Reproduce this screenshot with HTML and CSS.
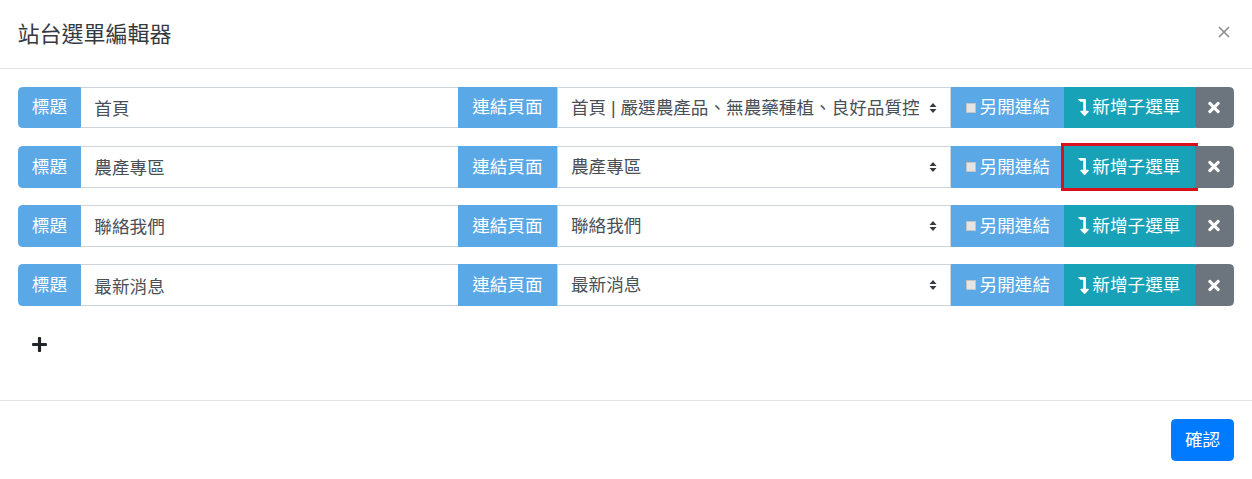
FILE: index.html
```html
<!DOCTYPE html>
<html lang="zh-Hant">
<head>
    <meta charset="UTF-8">
    <meta name="viewport" content="width=device-width, initial-scale=1.0">
    <title>站台選單編輯器</title>
    <link rel="stylesheet" href="styles.css">
</head>
<body>
    <div class="modal">
        <!-- 標頭 -->
        <div class="modal-header">
            <h5 class="modal-title">站台選單編輯器</h5>
            <button class="close-btn" type="button" aria-label="Close">
                <svg width="12" height="12" viewBox="0 0 12 12"><path d="M1 1L11 11M11 1L1 11" stroke="#8c8c8c" stroke-width="1.6" fill="none"/></svg>
            </button>
        </div>

        <!-- 選單列表 -->
        <div class="modal-body">
            <div class="menu-row">
                <span class="group-text first">標題</span>
                <input class="form-control" type="text" value="首頁">
                <span class="group-text">連結頁面</span>
                <div class="select-wrap">
                    <select class="custom-select">
                        <option>首頁 | 嚴選農產品、無農藥種植、良好品質控管</option>
                    </select>
                    <svg class="select-arrow" width="8" height="12" viewBox="0 0 8 12"><path d="M4 1L7.5 5H0.5Z M4 11L0.5 7H7.5Z" fill="#343a40"/></svg>
                </div>
                <label class="group-text"><span class="check-box"></span>另開連結</label>
                <button class="btn btn-info" type="button">
                    <svg width="11" height="17" viewBox="0 0 320 512"><path fill="#fff" d="M313.553 392.331L209.587 504.334c-9.485 10.214-25.676 10.229-35.174 0L70.438 392.331C56.232 377.031 67.062 352 88.025 352H152V80H68.024a11.996 11.996 0 0 1-8.485-3.515l-56-56C-4.021 12.926 1.333 0 12.024 0H208c13.255 0 24 10.745 24 24v328h63.966c20.878 0 31.851 24.969 17.587 40.331z"/></svg>新增子選單
                </button>
                <button class="btn btn-secondary last" type="button">
                    <svg width="12" height="17" viewBox="0 0 352 512"><path fill="#fff" d="M242.72 256l100.07-100.07c12.28-12.28 12.28-32.19 0-44.48l-22.24-22.24c-12.28-12.28-32.19-12.28-44.48 0L176 189.28 75.930 89.21c-12.28-12.28-32.19-12.28-44.48 0L9.21 111.45c-12.28 12.28-12.28 32.19 0 44.48L109.28 256 9.21 356.07c-12.280 12.28-12.28 32.19 0 44.48l22.24 22.24c12.28 12.28 32.2 12.28 44.48 0L176 322.72l100.07 100.07c12.28 12.28 32.2 12.28 44.48 0l22.24-22.24c12.28-12.28 12.28-32.19 0-44.48L242.72 256z"/></svg>
                </button>
            </div>

            <div class="menu-row">
                <span class="group-text first">標題</span>
                <input class="form-control" type="text" value="農產專區">
                <span class="group-text">連結頁面</span>
                <div class="select-wrap">
                    <select class="custom-select">
                        <option>農產專區</option>
                    </select>
                    <svg class="select-arrow" width="8" height="12" viewBox="0 0 8 12"><path d="M4 1L7.5 5H0.5Z M4 11L0.5 7H7.5Z" fill="#343a40"/></svg>
                </div>
                <label class="group-text"><span class="check-box"></span>另開連結</label>
                <button class="btn btn-info marked" type="button">
                    <svg width="11" height="17" viewBox="0 0 320 512"><path fill="#fff" d="M313.553 392.331L209.587 504.334c-9.485 10.214-25.676 10.229-35.174 0L70.438 392.331C56.232 377.031 67.062 352 88.025 352H152V80H68.024a11.996 11.996 0 0 1-8.485-3.515l-56-56C-4.021 12.926 1.333 0 12.024 0H208c13.255 0 24 10.745 24 24v328h63.966c20.878 0 31.851 24.969 17.587 40.331z"/></svg>新增子選單
                </button>
                <button class="btn btn-secondary last" type="button">
                    <svg width="12" height="17" viewBox="0 0 352 512"><path fill="#fff" d="M242.72 256l100.07-100.07c12.28-12.28 12.28-32.19 0-44.48l-22.24-22.24c-12.28-12.28-32.19-12.28-44.48 0L176 189.28 75.930 89.21c-12.28-12.28-32.19-12.28-44.48 0L9.21 111.45c-12.28 12.28-12.28 32.19 0 44.48L109.28 256 9.21 356.07c-12.280 12.28-12.28 32.19 0 44.48l22.24 22.24c12.28 12.28 32.2 12.28 44.48 0L176 322.72l100.07 100.07c12.28 12.28 32.2 12.28 44.48 0l22.24-22.24c12.28-12.28 12.28-32.19 0-44.48L242.72 256z"/></svg>
                </button>
            </div>

            <div class="menu-row">
                <span class="group-text first">標題</span>
                <input class="form-control" type="text" value="聯絡我們">
                <span class="group-text">連結頁面</span>
                <div class="select-wrap">
                    <select class="custom-select">
                        <option>聯絡我們</option>
                    </select>
                    <svg class="select-arrow" width="8" height="12" viewBox="0 0 8 12"><path d="M4 1L7.5 5H0.5Z M4 11L0.5 7H7.5Z" fill="#343a40"/></svg>
                </div>
                <label class="group-text"><span class="check-box"></span>另開連結</label>
                <button class="btn btn-info" type="button">
                    <svg width="11" height="17" viewBox="0 0 320 512"><path fill="#fff" d="M313.553 392.331L209.587 504.334c-9.485 10.214-25.676 10.229-35.174 0L70.438 392.331C56.232 377.031 67.062 352 88.025 352H152V80H68.024a11.996 11.996 0 0 1-8.485-3.515l-56-56C-4.021 12.926 1.333 0 12.024 0H208c13.255 0 24 10.745 24 24v328h63.966c20.878 0 31.851 24.969 17.587 40.331z"/></svg>新增子選單
                </button>
                <button class="btn btn-secondary last" type="button">
                    <svg width="12" height="17" viewBox="0 0 352 512"><path fill="#fff" d="M242.72 256l100.07-100.07c12.28-12.28 12.28-32.19 0-44.48l-22.24-22.24c-12.28-12.28-32.19-12.28-44.48 0L176 189.28 75.930 89.21c-12.28-12.28-32.19-12.28-44.48 0L9.21 111.45c-12.28 12.28-12.28 32.19 0 44.48L109.28 256 9.21 356.07c-12.280 12.28-12.28 32.19 0 44.48l22.24 22.24c12.28 12.28 32.2 12.28 44.48 0L176 322.72l100.07 100.07c12.28 12.28 32.2 12.28 44.48 0l22.24-22.24c12.28-12.28 12.28-32.19 0-44.48L242.72 256z"/></svg>
                </button>
            </div>

            <div class="menu-row">
                <span class="group-text first">標題</span>
                <input class="form-control" type="text" value="最新消息">
                <span class="group-text">連結頁面</span>
                <div class="select-wrap">
                    <select class="custom-select">
                        <option>最新消息</option>
                    </select>
                    <svg class="select-arrow" width="8" height="12" viewBox="0 0 8 12"><path d="M4 1L7.5 5H0.5Z M4 11L0.5 7H7.5Z" fill="#343a40"/></svg>
                </div>
                <label class="group-text"><span class="check-box"></span>另開連結</label>
                <button class="btn btn-info" type="button">
                    <svg width="11" height="17" viewBox="0 0 320 512"><path fill="#fff" d="M313.553 392.331L209.587 504.334c-9.485 10.214-25.676 10.229-35.174 0L70.438 392.331C56.232 377.031 67.062 352 88.025 352H152V80H68.024a11.996 11.996 0 0 1-8.485-3.515l-56-56C-4.021 12.926 1.333 0 12.024 0H208c13.255 0 24 10.745 24 24v328h63.966c20.878 0 31.851 24.969 17.587 40.331z"/></svg>新增子選單
                </button>
                <button class="btn btn-secondary last" type="button">
                    <svg width="12" height="17" viewBox="0 0 352 512"><path fill="#fff" d="M242.72 256l100.07-100.07c12.28-12.28 12.28-32.19 0-44.48l-22.24-22.24c-12.28-12.28-32.19-12.28-44.48 0L176 189.28 75.930 89.21c-12.28-12.28-32.19-12.28-44.48 0L9.21 111.45c-12.28 12.28-12.28 32.19 0 44.48L109.28 256 9.21 356.07c-12.280 12.28-12.28 32.19 0 44.48l22.24 22.24c12.28 12.28 32.2 12.28 44.48 0L176 322.72l100.07 100.07c12.28 12.28 32.2 12.28 44.48 0l22.24-22.24c12.28-12.28 12.28-32.19 0-44.48L242.72 256z"/></svg>
                </button>
            </div>

            <!-- 新增一列 -->
            <div class="add-row">
                <button class="btn btn-plain" type="button">
                    <svg width="15" height="17" viewBox="0 0 448 512"><path fill="#212529" d="M416 208H272V64c0-17.67-14.33-32-32-32h-32c-17.67 0-32 14.330-32 32v144H32c-17.67 0-32 14.33-32 32v32c0 17.67 14.33 32 32 32h144v144c0 17.67 14.33 32 32 32h32c17.67 0 32-14.33 32-32V304h144c17.67 0 32-14.33 32-32v-32c0-17.67-14.33-32-32-32z"/></svg>
                </button>
            </div>
        </div>

        <!-- 頁尾 -->
        <div class="modal-footer">
            <button class="btn btn-primary" type="button">確認</button>
        </div>
    </div>
</body>
</html>
```

FILE: styles.css
```css
* {
    box-sizing: border-box;
}

body {
    margin: 0;
    background: #fff;
    font-family: 'Liberation Sans', 'Noto Sans CJK TC', sans-serif;
    font-size: 17.6px;
    line-height: 1.5;
    color: #212529;
}

.modal {
    background: #fff;
}

/* 標頭 */
.modal-header {
    display: flex;
    justify-content: space-between;
    align-items: flex-start;
    padding: 17.6px;
    border-bottom: 1px solid #e3e6e9;
}

.modal-title {
    margin: 0;
    font-size: 22px;
    font-weight: 400;
    line-height: 1.5;
    color: #343a40;
}

.close-btn {
    display: flex;
    padding: 0;
    margin: 8.5px 4px 0 0;
    background: none;
    border: none;
    cursor: pointer;
}

/* 內容 */
.modal-body {
    padding: 17.6px;
}

.menu-row {
    display: flex;
    align-items: stretch;
    height: 41.6px;
    margin-bottom: 17.6px;
}

.group-text {
    display: flex;
    align-items: center;
    padding: 0 13.2px;
    background-color: #5ba8e6;
    border: 1px solid #5ba8e6;
    color: #fff;
    white-space: nowrap;
}

.group-text.first {
    border-radius: 4.4px 0 0 4.4px;
}

.check-box {
    display: inline-block;
    width: 10px;
    height: 10px;
    margin-right: 4px;
    background: #e4e4e4;
    border: 1px solid #c4c4c4;
}

.form-control {
    flex: 1 1 378px;
    width: auto;
    min-width: 0;
    padding: 0 13.2px;
    font-family: inherit;
    font-size: 17.6px;
    color: #495057;
    background: #fff;
    border: 1px solid #ced4da;
    border-left: none;
    border-right: none;
    outline: none;
}

.select-wrap {
    position: relative;
    display: flex;
    flex: 1 1 396px;
    min-width: 0;
}

.custom-select {
    width: 100%;
    padding: 0 30.8px 0 13.2px;
    font-family: inherit;
    font-size: 17.6px;
    color: #495057;
    background: #fff;
    border: 1px solid #ced4da;
    border-radius: 0;
    appearance: none;
    -webkit-appearance: none;
    outline: none;
}

.select-arrow {
    position: absolute;
    right: 14px;
    top: 15px;
    pointer-events: none;
}

.btn {
    display: inline-flex;
    align-items: center;
    gap: 3px;
    padding: 0 13.2px;
    font-family: inherit;
    font-size: 17.6px;
    line-height: 1.5;
    color: #fff;
    border: 1px solid transparent;
    border-radius: 0;
    white-space: nowrap;
    cursor: pointer;
}

.btn-info {
    background-color: #17a2b8;
    border-color: #17a2b8;
}

.btn-info.marked {
    outline: 3px solid #d8101c;
    outline-offset: -0.5px;
}

.btn-secondary {
    justify-content: center;
    width: 40px;
    padding: 0;
    background-color: #6c757d;
    border-color: #6c757d;
}

.btn.last {
    border-radius: 0 4.4px 4.4px 0;
}

.add-row {
    display: flex;
    margin-bottom: 17.6px;
}

.btn-plain {
    height: 41.6px;
    background: none;
}

/* 頁尾 */
.modal-footer {
    display: flex;
    justify-content: flex-end;
    padding: 17.6px;
    border-top: 1px solid #e3e6e9;
}

.btn-primary {
    height: 41.6px;
    background-color: #007bff;
    border-color: #007bff;
    border-radius: 4.4px;
}
```
